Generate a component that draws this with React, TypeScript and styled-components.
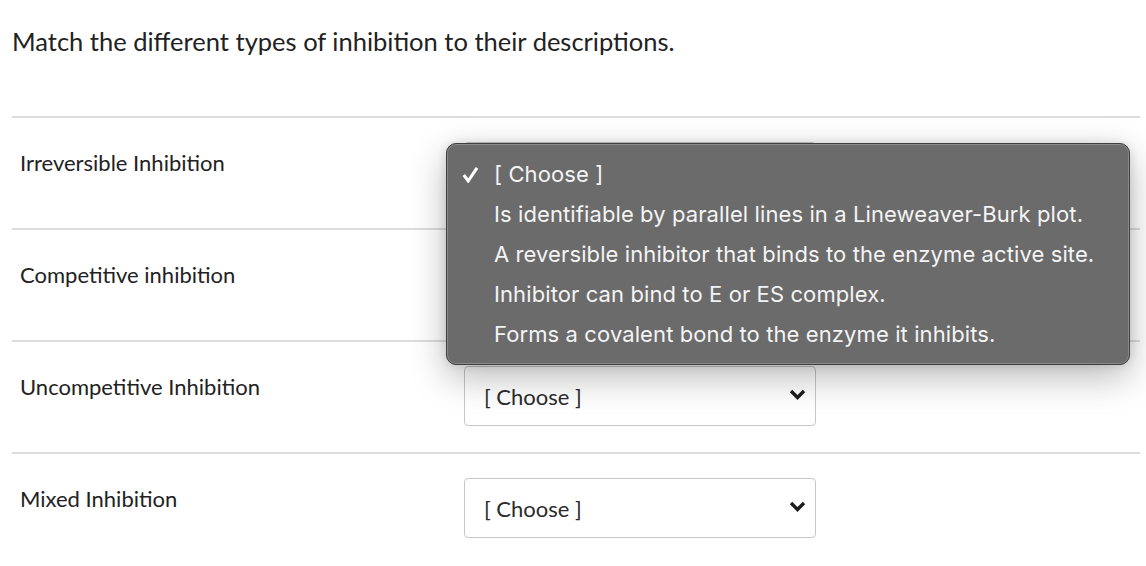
import React from 'react'
import styled, { createGlobalStyle } from 'styled-components'

const GlobalStyle = createGlobalStyle`
  html, body {
    margin: 0;
    padding: 0;
    background: #fff;
    font-family: Lato, "Noto Sans", sans-serif;
    color: #222;
  }
`

const Page = styled.div`
  padding: 26px 6px 0 12px;
  width: 1146px;
  box-sizing: border-box;
  overflow: hidden;
  height: 566px;
`

const Question = styled.p`
  margin: 0 0 60px 0;
  font-size: 25.5px;
  line-height: 30px;
  color: #222;
`

const Row = styled.div`
  display: flex;
  align-items: flex-start;
  border-top: 2px solid #dddddd;
  padding: 24px 0 26px 8px;
  height: 60px;
`

const Label = styled.div`
  width: 444px;
  flex: none;
  margin-top: 7px;
  font-size: 22px;
  line-height: 28px;
  color: #222;
`

const SelectWrap = styled.div`
  position: relative;
`

const SelectBox = styled.div`
  box-sizing: border-box;
  width: 352px;
  height: 60px;
  border: 1.5px solid #c8c8c8;
  border-radius: 4px;
  display: flex;
  align-items: center;
  justify-content: space-between;
  padding: 0 9px 0 19px;
  font-size: 22px;
  color: #2b2b2b;
  background: #fff;
`

const Chevron = styled.svg`
  width: 17px;
  height: 11px;
  margin-top: -4px;
`

const Menu = styled.div`
  position: absolute;
  top: 1px;
  left: -18px;
  width: 684px;
  box-sizing: border-box;
  padding: 10px 0 10px 0;
  background: #6b6b6b;
  border: 1px solid #3f3f3f;
  border-radius: 10px;
  box-shadow: inset 0 0 0 1px #8a8a8a, 0 12px 36px rgba(0, 0, 0, 0.28), 0 0 10px rgba(0, 0, 0, 0.12);
  z-index: 2;
`

const MenuItem = styled.div`
  display: flex;
  align-items: center;
  height: 40px;
  font-family: Inter, "Liberation Sans", sans-serif;
  font-size: 22px;
  color: #f4f4f4;
  letter-spacing: 0.1px;
`

const Check = styled.span<{ $visible: boolean }>`
  width: 47px;
  flex: none;
  padding-left: 15px;
  box-sizing: border-box;
  display: flex;
  align-items: center;
  visibility: ${(p) => (p.$visible ? 'visible' : 'hidden')};
`

const options = [
  'Is identifiable by parallel lines in a Lineweaver-Burk plot.',
  'A reversible inhibitor that binds to the enzyme active site.',
  'Inhibitor can bind to E or ES complex.',
  'Forms a covalent bond to the enzyme it inhibits.',
]

const rows = ['Irreversible Inhibition', 'Competitive inhibition', 'Uncompetitive Inhibition', 'Mixed Inhibition']

const Select: React.FC<{ open?: boolean }> = ({ open }) => (
  <SelectWrap>
    <SelectBox>
      <span>[ Choose ]</span>
      <Chevron viewBox="0 0 17 11">
        <polyline points="2,2 8.5,8.5 15,2" fill="none" stroke="#1d1d1d" strokeWidth="3.4" />
      </Chevron>
    </SelectBox>
    {open && (
      <Menu>
        <MenuItem>
          <Check $visible={true}>
            <svg width="17" height="17" viewBox="0 0 17 17">
              <polyline points="1.8,9 6.2,15 15,1.8" fill="none" stroke="#fff" strokeWidth="3" />
            </svg>
          </Check>
          [ Choose ]
        </MenuItem>
        {options.map((o) => (
          <MenuItem key={o}>
            <Check $visible={false} />
            {o}
          </MenuItem>
        ))}
      </Menu>
    )}
  </SelectWrap>
)

const App: React.FC = () => {
  return (
    <>
      <GlobalStyle />
      <Page>
        <Question>Match the different types of inhibition to their descriptions.</Question>
        {rows.map((r, i) => (
          <Row key={r}>
            <Label>{r}</Label>
            <Select open={i === 0} />
          </Row>
        ))}
      </Page>
    </>
  )
}

export default App
